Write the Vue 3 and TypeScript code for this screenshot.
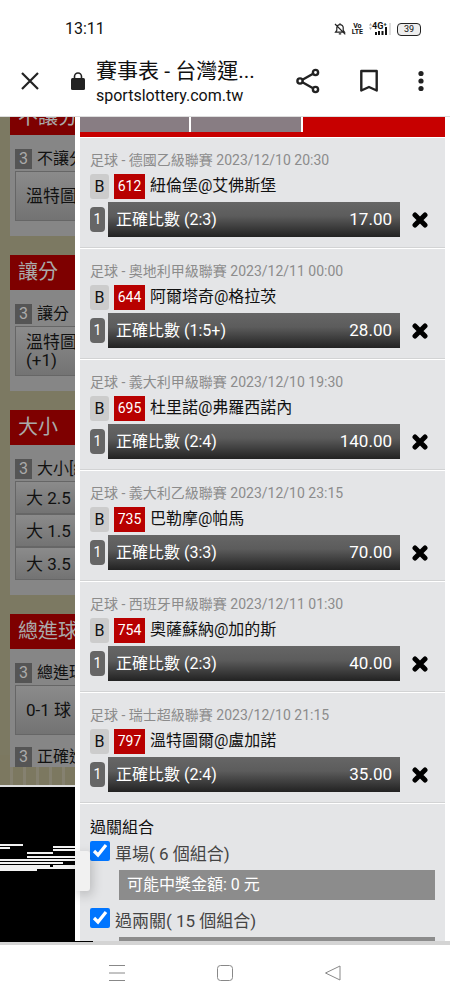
<script setup lang="ts">
import { ref } from 'vue'

interface Bet {
  league: string
  code: string
  teams: string
  score: string
  odds: string
}

const bets: Bet[] = [
  { league: '足球 - 德國乙級聯賽 2023/12/10 20:30', code: '612', teams: '紐倫堡@艾佛斯堡', score: '2:3', odds: '17.00' },
  { league: '足球 - 奧地利甲級聯賽 2023/12/11 00:00', code: '644', teams: '阿爾塔奇@格拉茨', score: '1:5+', odds: '28.00' },
  { league: '足球 - 義大利甲級聯賽 2023/12/10 19:30', code: '695', teams: '杜里諾@弗羅西諾內', score: '2:4', odds: '140.00' },
  { league: '足球 - 義大利乙級聯賽 2023/12/10 23:15', code: '735', teams: '巴勒摩@帕馬', score: '3:3', odds: '70.00' },
  { league: '足球 - 西班牙甲級聯賽 2023/12/11 01:30', code: '754', teams: '奧薩蘇納@加的斯', score: '2:3', odds: '40.00' },
  { league: '足球 - 瑞士超級聯賽 2023/12/10 21:15', code: '797', teams: '溫特圖爾@盧加諾', score: '2:4', odds: '35.00' },
]

const single = ref(true)
const double = ref(true)
</script>

<template>
  <div class="phone">
    <header>
      <div class="status">
        <time>13:11</time>
        <div class="indicators">
          <svg width="12" height="12" viewBox="0 0 12 12" fill="none" stroke="#222" stroke-width="1.2">
            <path d="M1.5 9.2h9L9.2 7.3V4.6C9.2 2.8 7.8 1.7 6 1.7S2.8 2.8 2.8 4.6v2.7zM6 .3v1.4M4.8 10.8h2.4M1 1l10.3 10.4" />
          </svg>
          <span class="volte"><b>Vo</b><b>LTE</b></span>
          <span class="signal">
            <svg class="updown" width="3" height="7" viewBox="0 0 3 7" fill="#aaa"><path d="M0 2.5 1.5 0 3 2.5zM0 4.5h3L1.5 7z" /></svg>
            <span class="bars">
              <b>4G⁺</b>
              <svg width="19" height="12" viewBox="0 0 19 12"><path d="M3 9h2v3H3zM6 8h2v4H6zM9.5 8h2v4h-2zM13 4h2v8h-2z" fill="#111" /><path d="M17 0h2v12h-2z" fill="#ddd" /></svg>
            </span>
          </span>
          <span class="battery">39</span>
        </div>
      </div>
      <div class="toolbar">
        <button class="close" aria-label="關閉">
          <svg width="18" height="18" viewBox="0 0 18 18" stroke="#222" stroke-width="2.2"><path d="M1 1l16 16M17 1 1 17" /></svg>
        </button>
        <svg class="lock" width="14" height="18" viewBox="0 0 14 18"><rect y="6" width="14" height="12" rx="1.5" fill="#222" /><path d="M3.5 7V4.5a3.5 3.5 0 0 1 7 0V7" fill="none" stroke="#222" stroke-width="1.6" /></svg>
        <div class="title">
          <h1>賽事表 - 台灣運...</h1>
          <p>sportslottery.com.tw</p>
        </div>
        <div class="actions">
          <button aria-label="分享">
            <svg width="24" height="26" viewBox="0 0 24 26" fill="none" stroke="#222" stroke-width="2.4"><path d="M6 12l11.5-6.5M6 14l11.5 6.5" /><circle cx="4" cy="13" r="2.6" /><circle cx="19.5" cy="4.5" r="2.6" /><circle cx="19.5" cy="21.5" r="2.6" /></svg>
          </button>
          <button aria-label="書籤">
            <svg width="18" height="24" viewBox="0 0 18 24" fill="none" stroke="#222" stroke-width="2.4" stroke-linejoin="round"><path d="M1.3 2h15.400v19.500L9 18l-7.700 3.500z" /></svg>
          </button>
          <button aria-label="選單">
            <svg width="6" height="22" viewBox="0 0 6 22" fill="#222"><circle cx="3" cy="3.5" r="2.6" /><circle cx="3" cy="11" r="2.6" /><circle cx="3" cy="18.5" r="2.6" /></svg>
          </button>
        </div>
      </div>
    </header>

    <main>
      <aside>
        <div class="market-list">
          <section>
            <h2>不讓分</h2>
            <div class="market">
              <h3><i>3</i>不讓分</h3>
              <button class="tall">溫特圖</button>
            </div>
          </section>
          <section>
            <h2>讓分</h2>
            <div class="market">
              <h3><i>3</i>讓分</h3>
              <button class="tall">溫特圖<br />(+1)</button>
            </div>
          </section>
          <section>
            <h2>大小</h2>
            <div class="market">
              <h3><i>3</i>大小[總</h3>
              <button>大 2.5</button>
              <button>大 1.5</button>
              <button>大 3.5</button>
            </div>
          </section>
          <section>
            <h2>總進球</h2>
            <div class="market last">
              <h3><i>3</i>總進球</h3>
              <button class="tall">0-1 球</button>
              <h3 class="next"><i>3</i>正確進</h3>
            </div>
          </section>
        </div>
        <div class="dark">
          <svg width="75" height="28" viewBox="0 0 75 28" fill="#f2f2f2">
            <path d="M0 0h23v2H0zM0 3h10v2H0zM53 2h22v2H53zM53 5h22v2H53zM27 8h26v2H27zM27 12h48v2H27zM0 15h75v2H0zM0 18h63v2H0zM0 21h50v2h3v-2h22v4H37v2H0z" />
          </svg>
        </div>
      </aside>

      <div class="slip">
        <nav class="tabs">
          <button aria-label="一"></button><button aria-label="二"></button><button class="active" aria-label="三"></button>
        </nav>
        <article v-for="bet in bets" :key="bet.code" class="bet">
          <p class="league">{{ bet.league }}</p>
          <div class="match">
            <span class="banker">B</span><span class="code">{{ bet.code }}</span><span>{{ bet.teams }}</span>
          </div>
          <div class="pick">
            <span class="count">1</span>
            <div class="bar"><span>正確比數 ({{ bet.score }})</span><span class="odds">{{ bet.odds }}</span></div>
            <button class="remove" aria-label="移除">
              <svg width="16" height="16" viewBox="0 0 16 16" stroke="#000" stroke-width="5" stroke-linecap="round"><path d="M3 3l10 10M13 3 3 13" /></svg>
            </button>
          </div>
        </article>
        <section class="combos">
          <h2>過關組合</h2>
          <label><input v-model="single" type="checkbox" /><span>單場( 6 個組合)</span></label>
          <p class="win">可能中獎金額: 0 元</p>
          <label><input v-model="double" type="checkbox" /><span>過兩關( 15 個組合)</span></label>
          <p class="win"></p>
        </section>
      </div>
      <div class="handle"></div>
    </main>

    <footer>
      <button aria-label="最近"><svg width="16" height="16" viewBox="0 0 16 16" stroke="#888"><path d="M0 .5h16M0 8h16M0 15.5h16" /></svg></button>
      <button aria-label="主畫面"><svg width="16" height="16" viewBox="0 0 16 16" fill="none" stroke="#888"><rect x=".5" y=".5" width="15" height="15" rx="3" /></svg></button>
      <button aria-label="返回"><svg width="16" height="16" viewBox="0 0 16 16" fill="none" stroke="#888" stroke-linejoin="round"><path d="M.5 8 15 1v14z" /></svg></button>
    </footer>
  </div>
</template>

<style>
body {
  margin: 0;
}
</style>

<style scoped>
* {
  box-sizing: border-box;
}
h1, h2, h3, p {
  margin: 0;
  font-weight: 400;
}
button {
  padding: 0;
  border: 0;
  background: none;
  font: inherit;
  color: inherit;
}
svg {
  display: block;
}
.phone {
  display: flex;
  flex-direction: column;
  height: 100vh;
  overflow: hidden;
  background: #fff;
  color: #111;
  font-family: Roboto, "Noto Sans CJK TC", sans-serif;
  font-size: 16px;
  line-height: 20px;
}
header {
  flex: none;
  border-bottom: 1px solid #ddd;
}
.status {
  display: flex;
  align-items: center;
  justify-content: space-between;
  padding: 17px 29px 0 65px;
  height: 41px;
}
.indicators {
  display: flex;
  align-items: center;
  gap: 6px;
}
.volte {
  display: flex;
  flex-direction: column;
  align-items: center;
  font-size: 7px;
  line-height: 6px;
}
.signal {
  display: flex;
}
.bars {
  position: relative;
}
.bars b {
  position: absolute;
  top: -1px;
  left: 0;
  font-size: 9px;
  line-height: 8px;
}
.battery {
  width: 24px;
  height: 13px;
  border: 1px solid #222;
  border-radius: 4px;
  background: #eee;
  font-size: 9px;
  line-height: 11px;
  text-align: center;
}
.toolbar {
  display: flex;
  align-items: center;
  height: 75px;
  padding: 4px 26px 0 21px;
}
.lock {
  margin-left: 32px;
}
.title {
  flex: 1;
  margin-left: 11px;
  padding-top: 2px;
}
.title h1 {
  font-size: 21px;
  line-height: 28px;
}
.title p {
  line-height: 22px;
}
.actions {
  display: flex;
  align-items: center;
  gap: 40px;
}
main {
  position: relative;
  display: flex;
  flex: 1;
  min-height: 0;
  overflow: hidden;
}
aside {
  display: flex;
  flex-direction: column;
  flex: none;
  width: 75px;
  overflow: hidden;
  white-space: nowrap;
}
.market-list {
  flex: none;
  height: 670px;
  padding-left: 10px;
  overflow: hidden;
  border-bottom: 2px solid #ddd;
  background: repeating-linear-gradient(90deg, #7c7860 0 10px, #858170 10px 13px) bottom / 100% 30px no-repeat #7c7962;
}
.market-list section {
  width: 200px;
  margin-bottom: 19px;
}
.market-list section:first-child {
  margin-top: -17px;
}
.market-list h2 {
  height: 35px;
  padding-left: 8px;
  background: #7e0000;
  color: #aaa;
  font-size: 20px;
  line-height: 35px;
}
.market {
  padding: 14px 5px 15px;
  background: #868686;
}
.market.last {
  padding-bottom: 0;
}
.market h3 {
  display: flex;
  align-items: flex-start;
  gap: 5px;
  height: 22px;
  font-size: 16px;
}
.market .next {
  height: 20px;
  margin-top: 12px;
}
.market i {
  width: 17px;
  height: 20px;
  background: #555;
  color: #aaa;
  font-style: normal;
  text-align: center;
}
.market button {
  display: block;
  width: 100%;
  height: 33px;
  padding-left: 10px;
  border: 1px solid #666;
  background: linear-gradient(#8b8b8b, #737373);
  font-size: 17px;
  line-height: 18px;
  text-align: left;
}
.market button.tall {
  height: 50px;
}
.dark {
  flex: 1;
  padding-top: 57px;
  background: #000;
}
.slip {
  flex: 1;
  min-width: 0;
  border: solid #fff;
  border-width: 0 5px;
  background: #e4e5e7;
}
.tabs {
  display: flex;
  gap: 2px;
  height: 20px;
  border-bottom: 5px solid #c70000;
  background: #fff;
}
.tabs button {
  flex: 1;
  background: #887d83;
}
.tabs .active {
  flex: 0 0 39%;
  background: #c70000;
}
.bet {
  height: 111px;
  padding: 12px 10px 0;
  border-top: 1px solid #fff;
  border-bottom: 1px solid #d2d3d4;
}
.league {
  color: #8c8c8c;
  font-size: 14px;
}
.match {
  display: flex;
  align-items: center;
  gap: 5px;
  height: 26px;
  margin-top: 3px;
}
.banker {
  width: 19px;
  height: 25px;
  border-radius: 3px;
  background: #ccc;
  line-height: 25px;
  text-align: center;
}
.code {
  width: 31px;
  height: 25px;
  background: #b80000;
  color: #fff;
  font-size: 14px;
  line-height: 25px;
  text-align: center;
}
.pick {
  display: flex;
  align-items: center;
  margin-top: 3px;
}
.count {
  width: 15px;
  height: 25px;
  border-radius: 4px;
  background: #666;
  color: #fff;
  font-size: 14px;
  line-height: 25px;
  text-align: center;
}
.bar {
  display: flex;
  flex: 1;
  justify-content: space-between;
  height: 35px;
  margin: 0 12px 0 3px;
  padding: 0 8px;
  background: linear-gradient(#666, #5c5c5c 40%, #222);
  color: #fff;
  line-height: 35px;
}
.odds {
  font-size: 17px;
}
.remove {
  margin-right: 7px;
}
.combos {
  padding: 14px 10px 0;
  border-top: 1px solid #fff;
}
.combos h2 {
  font-size: 16px;
}
.combos label {
  display: flex;
  gap: 5px;
  height: 32px;
  color: #444;
  font-size: 17px;
}
.combos label span {
  padding-top: 6px;
}
.combos input {
  width: 20px;
  height: 20px;
  margin: 3px 0 0;
  accent-color: #0075ff;
}
.win {
  height: 30px;
  margin: 0 0 5px 29px;
  padding-left: 8px;
  background: #8c8c8c;
  color: #fff;
  line-height: 30px;
}
.handle {
  position: absolute;
  top: 734px;
  left: 75px;
  width: 15px;
  height: 40px;
  border-radius: 0 3px 3px 0;
  background: #f1f1f1;
  box-shadow: 2px 4px 12px #0003;
}
footer {
  position: relative;
  display: flex;
  flex: none;
  align-items: center;
  justify-content: center;
  gap: 92px;
  height: 59px;
  border-top: 4px solid #d4d4d4;
  background: #fff;
}
footer::before {
  content: "";
  position: absolute;
  top: -4px;
  left: 0;
  width: 93px;
  height: 1px;
  background: #000;
}
</style>
